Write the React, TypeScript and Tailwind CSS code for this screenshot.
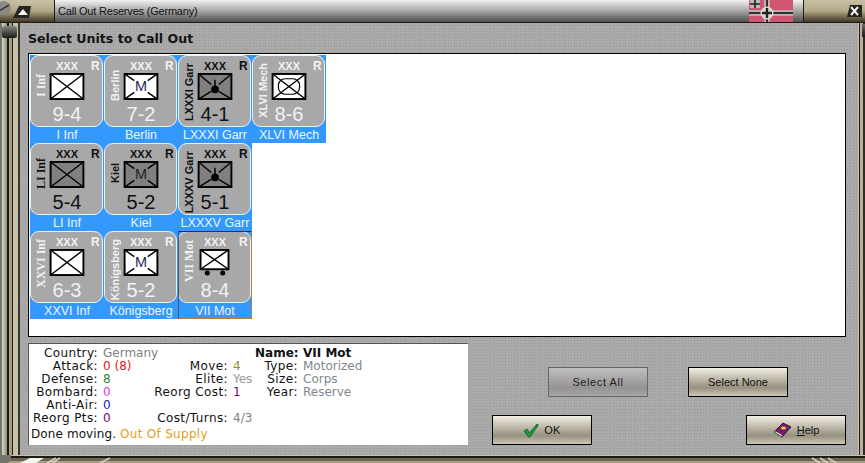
import type { ReactNode } from 'react'

const sans = 'font-["Liberation_Sans",Arial,sans-serif]'
const verdana = "font-['DejaVu_Sans',sans-serif]"

type Symbol = 'inf' | 'mil' | 'garr' | 'mech' | 'mot'

interface Unit {
  name: string
  value: string
  symbol: Symbol
  dark?: boolean
  serif?: boolean
  picked?: boolean
}

const units: (Unit | null)[] = [
  { name: 'I Inf', value: '9-4', symbol: 'inf', serif: true },
  { name: 'Berlin', value: '7-2', symbol: 'mil' },
  { name: 'LXXXI Garr', value: '4-1', symbol: 'garr', dark: true },
  { name: 'XLVI Mech', value: '8-6', symbol: 'mech' },
  { name: 'LI Inf', value: '5-4', symbol: 'inf', dark: true, serif: true },
  { name: 'Kiel', value: '5-2', symbol: 'mil', dark: true },
  { name: 'LXXXV Garr', value: '5-1', symbol: 'garr', dark: true },
  null,
  { name: 'XXVI Inf', value: '6-3', symbol: 'inf', serif: true },
  { name: 'Königsberg', value: '5-2', symbol: 'mil' },
  { name: 'VII Mot', value: '8-4', symbol: 'mot', serif: true, picked: true },
]

// NATO style counter box
function UnitBox({ symbol, dark }: { symbol: Symbol; dark?: boolean }) {
  const fill = dark ? '#808080' : '#ffffff'
  if (symbol === 'mot') {
    return (
      <svg width="36" height="28" viewBox="0 0 36 28" className="block">
        <rect x="3" y="1" width="29" height="20" fill={fill} stroke="#000" strokeWidth="2" />
        <path d="M3 1L32 21M32 1L3 21" stroke="#000" strokeWidth="1.5" />
        <circle cx="10" cy="25" r="2.6" fill="#000" />
        <circle cx="26" cy="25" r="2.6" fill="#000" />
      </svg>
    )
  }
  return (
    <svg width="36" height="28" viewBox="0 0 36 28" className="block">
      <rect x="1" y="1" width="34" height="26" fill={fill} stroke="#000" strokeWidth="2" />
      {symbol === 'inf' && <path d="M1 1L35 27M35 1L1 27" stroke="#000" strokeWidth="1.5" />}
      {symbol === 'mil' && (
        <>
          <path d="M1 1L11 8M35 1L25 8M1 27L11 20M35 27L25 20" stroke="#000" strokeWidth="1.5" />
          <text x="18" y="19" textAnchor="middle" fontSize="15" fontFamily="Liberation Sans" fill={dark ? '#222222' : '#1a2a5a'}>
            M
          </text>
        </>
      )}
      {symbol === 'garr' && (
        <>
          <path d="M1 1L14 12M35 1L22 12M1 27L14 19M35 27L22 19M18 7V17" stroke="#000" strokeWidth="1.5" />
          <circle cx="18" cy="17" r="4" fill="#000" />
        </>
      )}
      {symbol === 'mech' && (
        <>
          <path d="M1 1L35 27M35 1L1 27" stroke="#000" strokeWidth="1.5" />
          <rect x="7" y="6" width="22" height="16" rx="7" fill="none" stroke="#000" strokeWidth="1.2" />
        </>
      )}
    </svg>
  )
}

function UnitTile({ unit }: { unit: Unit }) {
  const ink = unit.dark ? 'text-[#111111]' : 'text-[#f2f2f2]'
  return (
    <div className="relative h-[88px] w-[74px] bg-[#3399ff]">
      <div className={`flex h-[72px] w-[73px] rounded-[9px] border border-[#e8f2ff] bg-[#a8a8a8] ${ink}`}>
        <div
          className={`mt-[7px] ml-[3px] min-h-[44px] w-[14px] rotate-180 self-start text-center leading-[14px] font-bold whitespace-nowrap [writing-mode:vertical-rl] ${unit.serif ? 'font-["Liberation_Serif",serif] text-[12px]' : `${sans} text-[11px]`}`}
        >
          {unit.name}
        </div>
        <div className="ml-[1px] flex w-[36px] flex-col items-center">
          <div className={`mt-[4px] h-[13px] text-[11px] leading-[13px] font-bold ${sans}`}>XXX</div>
          <UnitBox symbol={unit.symbol} dark={unit.dark} />
          <div className={`mt-[2px] text-[20px] leading-[24px] ${sans}`}>{unit.value}</div>
        </div>
        <div className={`mt-[4px] ml-[6px] text-[12px] leading-[13px] font-bold ${sans}`}>R</div>
      </div>
      <div className={`h-[16px] w-[74px] text-center text-[12.5px] leading-[16px] whitespace-nowrap text-[#eef6ff] ${sans}`}>{unit.name}</div>
      {unit.picked && <div className="absolute inset-0 border border-t-[#333333] border-r-[#b08040] border-b-[#b08040] border-l-[#555555]" />}
    </div>
  )
}

function Btn({ children, disabled }: { children: ReactNode; disabled?: boolean }) {
  return (
    <button
      className={`flex h-[30px] w-[100px] items-center justify-center gap-[5px] border text-[11px] ${sans} ${
        disabled
          ? 'border-[#666666] bg-gradient-to-b from-[#c2bfbf] via-[#969396] via-70% to-[#a8a5a5] tracking-[0.6px] text-[#222222]'
          : 'border-black bg-gradient-to-b from-[#f4efe6] via-[#97917f] via-70% to-[#cdc7b7] text-[#111111]'
      }`}
    >
      {children}
    </button>
  )
}

function Stat({ label, value, color, bold }: { label: string; value: string; color: string; bold?: boolean }) {
  return (
    <>
      <span className={`text-right whitespace-nowrap ${bold ? 'font-bold' : 'tracking-[0.4px]'}`}>{label}</span>
      <span className={`pl-[5px] whitespace-nowrap ${color}`}>{value}</span>
    </>
  )
}

const Blank = () => (
  <>
    <span />
    <span />
  </>
)

export default function App() {
  return (
    <div className="flex h-[463px] w-[865px] flex-col overflow-hidden bg-[#a9a9a9] bg-[radial-gradient(#9a9a9a_0.7px,transparent_0.8px),radial-gradient(#b8b8b8_0.7px,transparent_0.8px)] bg-[size:3px_3px,5px_5px]">
      {/* Title bar */}
      <div className="flex h-[23px] shrink-0 border-b border-[#1c1a14]">
        <div className="flex w-[55px] items-center border-r border-[#201c10] bg-gradient-to-b from-[#c9c1a6] via-[#b3a988] to-[#3f3826]">
          <svg width="34" height="22" viewBox="0 0 34 22" className="block">
            <circle cx="4" cy="8" r="7" fill="#8c8c84" />
            <path d="M-1 11L9 5" stroke="#3a3a34" strokeWidth="1.5" />
            <path d="M19 6H31L29 18H13Z" fill="#26241e" />
            <path d="M18 15L23 9L28 15Z" fill="#f2f2f2" />
          </svg>
        </div>
        <div className={`flex flex-1 items-center bg-gradient-to-b from-[#f2f2f2] via-[#a6a6a6] to-[#505050] pl-[3px] text-[11px] tracking-[-0.2px] text-[#111111] ${sans}`}>
          Call Out Reserves (Germany)
        </div>
        <svg width="44" height="22" viewBox="0 0 44 22" className="block">
          <rect width="44" height="22" fill="#cf5570" />
          <path d="M0 13H44M18 0V22" stroke="#e0e0e0" strokeWidth="5" />
          <path d="M0 13H44M18 0V22" stroke="#303030" strokeWidth="2.4" />
          <circle cx="18" cy="13" r="6.5" fill="#dadada" />
          <path d="M18 8V18M13 13H23" stroke="#222222" strokeWidth="2.4" />
          <rect x="1" y="0" width="10" height="8" fill="#bbbbbb" />
          <path d="M6 0V8M1 4H11" stroke="#222222" strokeWidth="1.6" />
        </svg>
        <div className="w-[10px] bg-gradient-to-b from-[#f2f2f2] via-[#a6a6a6] to-[#505050]" />
        <div className="flex w-[62px] items-center justify-end border-l border-[#201c10] bg-gradient-to-b from-[#c9c1a6] via-[#b3a988] to-[#3f3826] pr-[2px]">
          <svg width="16" height="14" viewBox="0 0 16 14" className="block">
            <path d="M3 1H15V13H0Z" fill="#26241e" />
            <path d="M4 3L11 11M11 3L4 11" stroke="#f2f2f2" strokeWidth="2" />
          </svg>
        </div>
      </div>

      <div className="flex min-h-0 flex-1">
        {/* Left frame */}
        <div className="relative flex w-[20px] shrink-0">
          <div className="w-[2px] bg-[#77756a]" />
          <div className="w-[5px] bg-gradient-to-r from-[#d8d8d0] to-[#8f8d80]" />
          <div className="w-[2px] bg-[#1c1a14]" />
          <div className="w-[3px] bg-[#a89f86]" />
          <div className="w-[1px] bg-[#1c1a14]" />
          <div className="w-[5px] bg-[#c8c1aa]" />
          <div className="w-[2px] bg-[#3a382c]" />
          <div className="absolute top-[3px] left-[2px] h-[12px] w-[15px] rounded-[2px] bg-gradient-to-b from-[#8a8a84] to-[#1e1e1a]" />
        </div>

        {/* Panel */}
        <div className="flex min-w-0 flex-1 flex-col pt-[7px] pl-[8px]">
          <div className={`h-[23px] text-[12.6px] leading-[18px] font-bold text-[#141414] ${verdana}`}>Select Units to Call Out</div>

          <div className="h-[284px] w-[818px] border border-black bg-white pt-[1px] pl-[1px]">
            <div className="grid grid-cols-[74px_74px_74px_74px] grid-rows-[88px_88px_88px]">
              {units.map((u, i) => (u ? <UnitTile key={i} unit={u} /> : <div key={i} />))}
            </div>
          </div>

          <div className="mt-[6px] flex gap-[24px]">
            {/* Info box */}
            <div className={`h-[102px] w-[440px] border-t border-l border-[#555555] bg-white pt-[3px] pl-[2px] text-[12px] leading-[13px] text-[#111111] ${verdana}`}>
              <div className="grid grid-cols-[67px_50px_80px_27px_43px_auto] justify-start">
                <Stat label="Country:" value="Germany" color="text-[#808080]" />
                <Blank />
                <Stat label="Name:" value="VII Mot" color="font-bold text-[#111111]" bold />

                <Stat label="Attack:" value="0 (8)" color="text-[#e02020]" />
                <Stat label="Move:" value="4" color="text-[#8f8f30]" />
                <Stat label="Type:" value="Motorized" color="text-[#808890]" />

                <Stat label="Defense:" value="8" color="text-[#2a8a2a]" />
                <Stat label="Elite:" value="Yes" color="text-[#9a9a9a]" />
                <Stat label="Size:" value="Corps" color="text-[#808890]" />

                <Stat label="Bombard:" value="0" color="text-[#e040e0]" />
                <Stat label="Reorg Cost:" value="1" color="text-[#800080]" />
                <Stat label="Year:" value="Reserve" color="text-[#808890]" />

                <Stat label="Anti-Air:" value="0" color="text-[#2020c0]" />
                <Blank />
                <Blank />

                <Stat label="Reorg Pts:" value="0" color="text-[#800080]" />
                <Stat label="Cost/Turns:" value="4/3" color="text-[#808080]" />
                <Blank />
              </div>
              <div className="mt-[3px] tracking-[0.1px]">
                Done moving. <span className="tracking-[0.3px] text-[#e0a020]">Out Of Supply</span>
              </div>
            </div>

            <div className="flex flex-1 flex-col">
              <div className="mt-[24px] ml-[56px] flex gap-[40px]">
                <Btn disabled>Select All</Btn>
                <Btn>Select None</Btn>
              </div>
              <div className="mt-[18px] flex w-[354px] justify-between">
                <Btn>
                  <svg width="16" height="15" viewBox="0 0 16 15" className="block">
                    <path d="M1 8L4 6L6.5 10L14 1L15.5 2L7 14H5.5Z" fill="#1f9a3a" stroke="#0f4f20" strokeWidth="0.7" />
                  </svg>
                  <span className="tracking-[0.4px]">OK</span>
                </Btn>
                <Btn>
                  <svg width="19" height="16" viewBox="0 0 19 16" className="block">
                    <path d="M1 10L10 1L18 5L9 15Z" fill="#7a1a70" stroke="#111111" strokeWidth="0.8" />
                    <path d="M1 10L9 15L9.5 13L2.5 9Z" fill="#eeeeee" stroke="#111111" strokeWidth="0.5" />
                    <ellipse cx="10.5" cy="6" rx="2.6" ry="1.6" fill="#e8d040" />
                  </svg>
                  <span>
                    <span className="underline">H</span>elp
                  </span>
                </Btn>
              </div>
            </div>
          </div>
        </div>

        {/* Right frame */}
        <div className="relative flex w-[7px] shrink-0">
          <div className="w-[1px] bg-[#c8c1aa]" />
          <div className="w-[1px] bg-[#1c1a14]" />
          <div className="w-[3px] bg-[#b8b09a]" />
          <div className="w-[2px] bg-[#2e2c22]" />
          <div className="absolute top-[1px] right-0 h-[13px] w-[3px] bg-gradient-to-b from-[#6a6a64] to-[#1e1e1a]" />
        </div>
      </div>

      {/* Bottom frame */}
      <svg width="865" height="8" viewBox="0 0 865 8" className="block shrink-0">
        <rect width="865" height="8" fill="#6e6650" />
        <rect width="865" height="1" fill="#c8c1aa" />
        <rect y="1" width="865" height="2" fill="#1c1a14" />
        <rect y="6" width="865" height="2" fill="#a79f88" />
        <path d="M20 8L30 3H44L36 8Z" fill="#f4f4f0" />
        <path d="M47 8L56 3M52 8L60 3M100 8L110 3M820 8L812 3M828 8L820 3M836 8L828 3" stroke="#d8d2c0" strokeWidth="1.5" />
        <circle cx="4" cy="2" r="7" fill="#77756a" />
      </svg>
    </div>
  )
}
